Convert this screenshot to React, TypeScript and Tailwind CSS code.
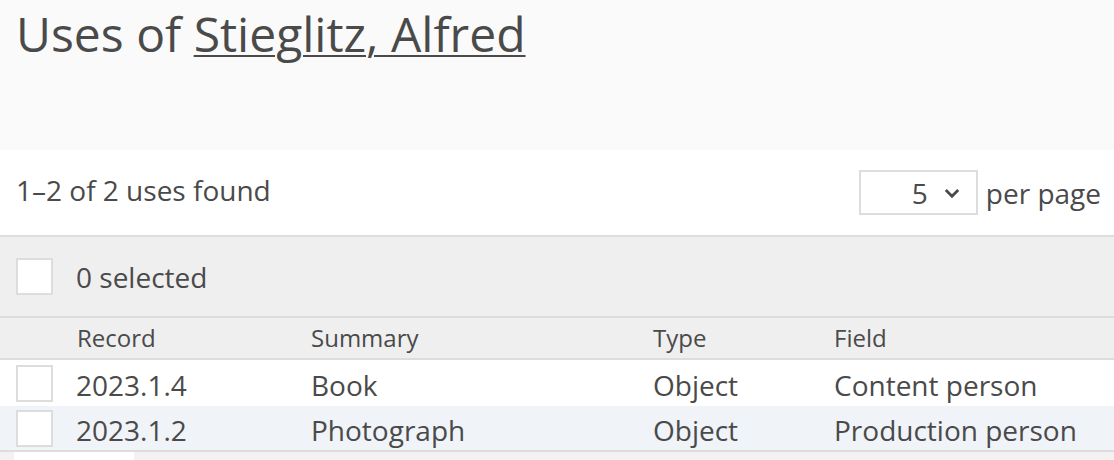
import React from 'react';

const rows = [
  { record: '2023.1.4', summary: 'Book', type: 'Object', field: 'Content person' },
  { record: '2023.1.2', summary: 'Photograph', type: 'Object', field: 'Production person' },
];

const Checkbox = () => (
  <div className="w-[37px] h-[37px] bg-white border-2 border-[#dddddd] shrink-0"></div>
);

export default function App() {
  return (
    <div
      className="w-[1114px] h-[460px] overflow-hidden bg-white text-[#4a4a4a]"
      style={{ fontFamily: '"Open Sans", "Noto Sans", sans-serif' }}
    >
      <div className="h-[150px] bg-[#fafafa] px-4 pt-[2px]">
        <h1 className="text-[48px] leading-[64px] font-normal">
          Uses of{' '}
          <a className="underline decoration-2 underline-offset-[3px]">Stieglitz, Alfred</a>
        </h1>
      </div>

      <div className="h-[87px] flex items-center justify-between px-4 pb-[6px] border-b-2 border-[#dddddd]">
        <div className="text-[28px] leading-[36px]">1–2 of 2 uses found</div>
        <div className="flex items-center gap-[8px] text-[28px] leading-[36px] mr-[-3px] mt-[6px]">
          <div className="w-[119px] h-[45px] border-2 border-[#dddddd] bg-white flex items-center justify-end pr-[16px] gap-[16px]">
            <span>5</span>
            <svg width="16" height="11" viewBox="0 0 16 11" fill="none" className="mt-[2px]">
              <path d="M1.8 2 L8 8.2 L14.2 2" stroke="#4a4a4a" strokeWidth="2.8" />
            </svg>
          </div>
          <span>per page</span>
        </div>
      </div>

      <div className="h-[81px] bg-[#efefef] flex items-center px-4 gap-[23px] border-b-2 border-[#dddddd]">
        <Checkbox />
        <span className="text-[28px] leading-[36px]">0 selected</span>
      </div>

      <div className="h-[42px] bg-[#efefef] flex items-center border-b-2 border-[#dddddd] text-[24px] leading-[32px]">
        <div className="w-[311px] pl-[77px]">Record</div>
        <div className="w-[342px]">Summary</div>
        <div className="w-[181px]">Type</div>
        <div>Field</div>
      </div>

      {rows.map((r, i) => (
        <div
          key={r.record}
          className={`h-[46px] flex items-center text-[28px] leading-[36px] ${i % 2 === 1 ? 'bg-[#f0f3f8] border-b-2 border-[#dddddd]' : 'bg-white'}`}
        >
          <div className="w-[311px] flex items-center pl-4 gap-[23px]">
            <Checkbox />
            <span className="pt-[4px]">{r.record}</span>
          </div>
          <div className="w-[342px] pt-[4px]">{r.summary}</div>
          <div className="w-[181px] pt-[4px]">{r.type}</div>
          <div className="pt-[4px]">{r.field}</div>
        </div>
      ))}

      <div className="h-[10px] bg-[#f2f2f2] flex">
        <div className="ml-[14px] w-[120px] bg-white"></div>
      </div>
    </div>
  );
}
